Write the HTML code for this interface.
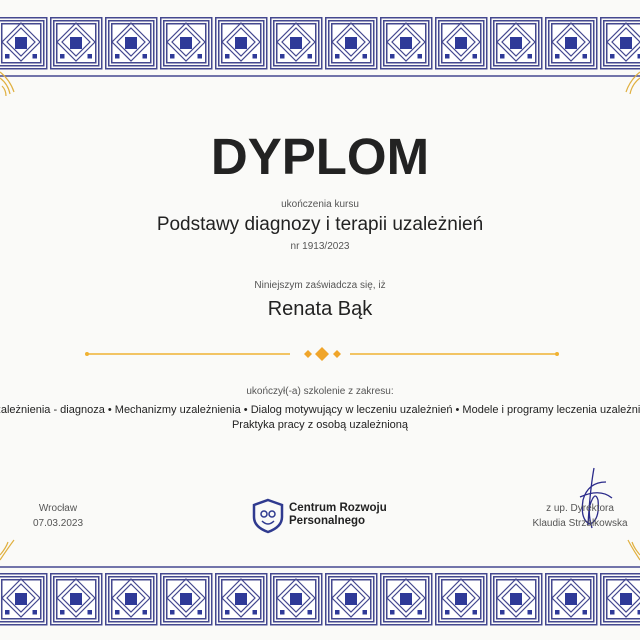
<!DOCTYPE html>
<html><head><meta charset="utf-8"><style>
body{margin:0;width:640px;height:640px;background:#fafaf8;overflow:hidden;position:relative;font-family:"Liberation Sans",sans-serif;color:#222}
.t{position:absolute;left:0;width:640px;text-align:center;white-space:nowrap}
</style></head><body>
<svg width="640" height="640" style="position:absolute;left:0;top:0">
<defs>
<g id="tile">
<rect x="0.75" y="0.75" width="51" height="51" fill="none" stroke="#44488f" stroke-width="1.5"/>
<rect x="3.75" y="3.75" width="45" height="45" fill="none" stroke="#44488f" stroke-width="1.5"/>
<rect x="6.75" y="6.75" width="39" height="39" fill="#fff" stroke="#44488f" stroke-width="1.5"/>
<path d="M26 6 L45 25 L26 44 L7 25 Z" fill="none" stroke="#44488f" stroke-width="1.2"/>
<path d="M26 11 L40 25 L26 39 L12 25 Z" fill="none" stroke="#44488f" stroke-width="1.2"/>
<rect x="20" y="20" width="12" height="12" fill="#2f3a98"/>
<rect x="10" y="37" width="4.5" height="4.5" fill="#2f3a98"/>
<rect x="37.5" y="37" width="4.5" height="4.5" fill="#2f3a98"/>
</g>
</defs>
<g id="row">
<use href="#tile" x="-5" y="17"/><use href="#tile" x="50" y="17"/><use href="#tile" x="105" y="17"/><use href="#tile" x="160" y="17"/><use href="#tile" x="215" y="17"/><use href="#tile" x="270" y="17"/><use href="#tile" x="325" y="17"/><use href="#tile" x="380" y="17"/><use href="#tile" x="435" y="17"/><use href="#tile" x="490" y="17"/><use href="#tile" x="545" y="17"/><use href="#tile" x="600" y="17"/>
</g>
<line x1="0" y1="76" x2="640" y2="76" stroke="#44488f" stroke-width="1.5"/>
<use href="#row" y="556"/>
<line x1="0" y1="567" x2="640" y2="567" stroke="#44488f" stroke-width="1.5"/>
<g fill="none" stroke="#e0b040" stroke-width="1.2">
<path d="M0 72 Q10 80 14 92 M0 78 Q8 84 10 94 M2 86 Q6 90 6 96"/>
<path d="M0 560 Q8 548 14 540 M0 555 Q6 548 8 542"/>
<path d="M640 72 Q630 80 626 92 M640 78 Q632 84 630 94"/>
<path d="M640 560 Q632 548 628 540 M640 555 Q634 548 632 542"/>
</g>
<line x1="86" y1="354" x2="290" y2="354" stroke="#f0b232" stroke-width="1.5"/>
<line x1="350" y1="354" x2="558" y2="354" stroke="#f0b232" stroke-width="1.5"/>
<circle cx="87" cy="354" r="2" fill="#f0b232"/><circle cx="557" cy="354" r="2" fill="#f0b232"/>
<path d="M308 350 L312 354 L308 358 L304 354Z M322 347 L329 354 L322 361 L315 354Z M337 350 L341 354 L337 358 L333 354Z" fill="#f0a52a"/>
<path d="M594 468 Q590 490 588 525 M606 482 Q588 482 583 500 Q580 520 590 524 Q600 520 598 500 Q595 490 590 505 Q588 515 592 528 M580 497 Q600 488 612 498" fill="none" stroke="#2a2a8a" stroke-width="1.3"/>
<g transform="translate(252,499)" fill="none" stroke="#2f3a8f" stroke-width="2.5">
<path d="M16 1 L30 6 L30 18 Q30 28 16 33 Q2 28 2 18 L2 6 Z"/>
<circle cx="12" cy="15" r="3" stroke-width="1.5"/><circle cx="20" cy="15" r="3" stroke-width="1.5"/>
<path d="M10 22 Q16 28 22 22" stroke-width="1.5"/>
</g>
</svg>
<div class="t" style="top:127px;font-size:51px;font-weight:bold;color:#222">DYPLOM</div>
<div class="t" style="top:199px;font-size:10px;color:#555">ukończenia kursu</div>
<div class="t" style="top:214px;font-size:19px;color:#222">Podstawy diagnozy i terapii uzależnień</div>
<div class="t" style="top:241px;font-size:10px;color:#555">nr 1913/2023</div>
<div class="t" style="top:280px;font-size:10px;color:#555">Niniejszym zaświadcza się, iż</div>
<div class="t" style="top:298px;font-size:20px;color:#222">Renata Bąk</div>
<div class="t" style="top:386px;font-size:10px;color:#555">ukończył(-a) szkolenie z zakresu:</div>
<div class="t" style="top:404px;font-size:11px;color:#222;left:-80px;width:800px">Uzależnienia - diagnoza • Mechanizmy uzależnienia • Dialog motywujący w leczeniu uzależnień • Modele i programy leczenia uzależnień</div>
<div class="t" style="top:419px;font-size:11px;color:#222">Praktyka pracy z osobą uzależnioną</div>
<div style="position:absolute;left:0;width:116px;top:501px;text-align:center;font-size:10px;color:#555;line-height:15px">Wrocław<br>07.03.2023</div>
<div style="position:absolute;left:289px;top:502px;font-size:11.5px;font-weight:bold;color:#222;line-height:13px">Centrum Rozwoju<br>Personalnego</div>
<div style="position:absolute;left:520px;width:120px;top:501px;text-align:center;font-size:10px;color:#555;line-height:15px">z up. Dyrektora<br>Klaudia Strzałkowska</div>
</body></html>
